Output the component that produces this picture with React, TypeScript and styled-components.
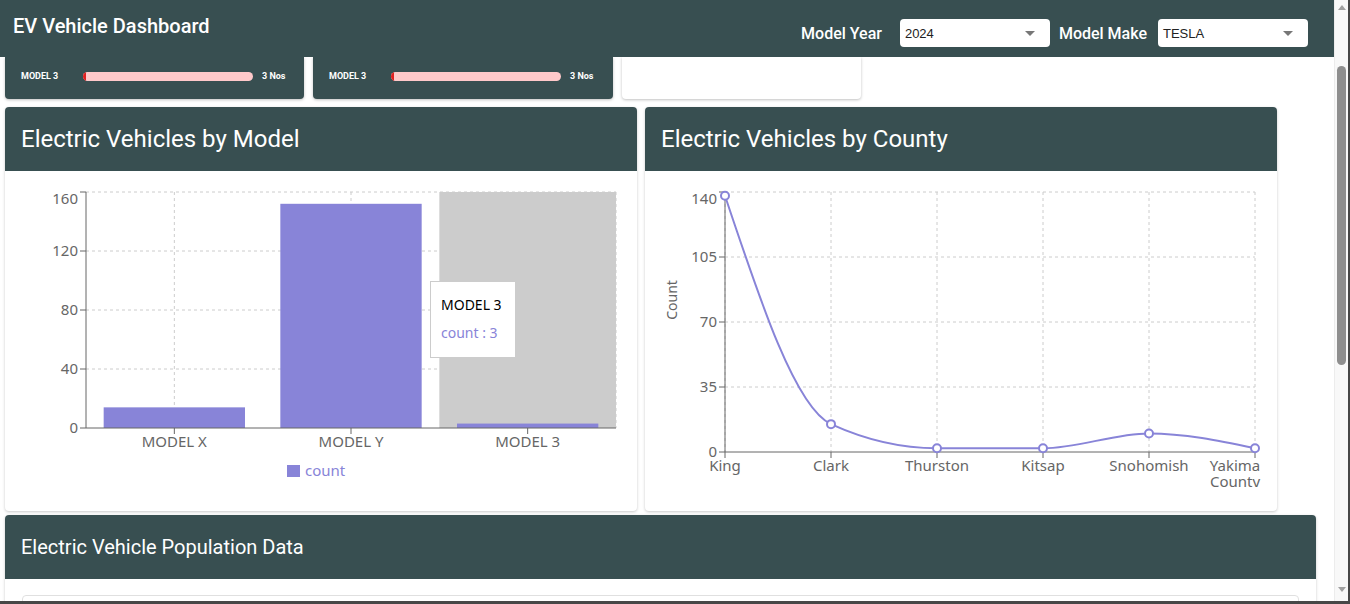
import React from "react";
import styled, { createGlobalStyle } from "styled-components";

const GlobalStyle = createGlobalStyle`
  html, body { margin: 0; padding: 0; background: #ffffff; }
  body { font-family: Roboto, "Noto Sans", Arial, sans-serif; }
  * { box-sizing: border-box; }
`;

const TEAL = "#384f51";
const PURPLE = "#8884d8";
const CHART_FONT = `"Noto Sans", "Open Sans", Arial, sans-serif`;

const Root = styled.div`
  display: flex;
  width: 1350px;
  height: 604px;
  overflow: hidden;
  background: #ffffff;
  border-right: 2px solid #474747;
  border-bottom: 3px solid #474747;
`;

const Main = styled.div`
  flex: 1;
  display: flex;
  flex-direction: column;
  min-width: 0;
  overflow: hidden;
`;

const Header = styled.header`
  flex: none;
  height: 57px;
  background: ${TEAL};
  display: flex;
  align-items: flex-start;
  justify-content: space-between;
  padding: 0 26px 0 13px;
  position: relative;
  z-index: 2;
`;

const Title = styled.h1`
  margin: 14px 0 0;
  font-family: Roboto, sans-serif;
  font-weight: 500;
  font-size: 20px;
  line-height: 24px;
  color: #ffffff;
`;

const Controls = styled.div`
  display: flex;
  align-items: center;
  margin-top: 19px;
`;

const ControlLabel = styled.span<{ $gap: number }>`
  font-family: Roboto, sans-serif;
  font-weight: 500;
  font-size: 16px;
  color: #ffffff;
  margin-right: ${(p) => p.$gap}px;
`;

const Select = styled.div<{ $last?: boolean }>`
  width: 150px;
  height: 28px;
  background: #ffffff;
  border-radius: 4px;
  display: flex;
  align-items: center;
  justify-content: space-between;
  padding: 0 15px 0 5px;
  margin-right: ${(p) => (p.$last ? "0" : "9px")};
  font-family: "Liberation Sans", Arial, sans-serif;
  font-size: 13px;
  color: #222;
`;

const Caret = styled.span`
  width: 0;
  height: 0;
  border-left: 5px solid transparent;
  border-right: 5px solid transparent;
  border-top: 5px solid #777;
`;

const Content = styled.div`
  flex: 1;
  display: flex;
  flex-direction: column;
  padding: 0 0 0 5px;
  overflow: hidden;
`;

const StatRow = styled.div`
  display: flex;
  gap: 9px;
  flex: none;
`;

const StatCard = styled.div<{ $w: number; $light?: boolean }>`
  width: ${(p) => p.$w}px;
  height: 42px;
  background: ${(p) => (p.$light ? "#ffffff" : TEAL)};
  border-radius: 0 0 4px 4px;
  box-shadow: 0 1px 3px rgba(0, 0, 0, 0.25);
  display: flex;
  align-items: center;
  padding: 0 0 4px 16px;
`;

const StatLabel = styled.span`
  width: 62px;
  font-family: Roboto, Arial, sans-serif;
  font-weight: 700;
  font-size: 9px;
  color: #ffffff;
`;

const Track = styled.div`
  width: 170px;
  height: 9px;
  border-radius: 5px;
  background: #ffc9ca;
  overflow: hidden;
  display: flex;
`;

const Fill = styled.div`
  height: 100%;
  background: #e02020;
`;

const StatValue = styled.span`
  margin-left: 9px;
  font-family: Roboto, Arial, sans-serif;
  font-weight: 700;
  font-size: 9px;
  color: #ffffff;
`;

const ChartRow = styled.div`
  display: flex;
  gap: 8px;
  margin-top: 8px;
  flex: none;
`;

const Card = styled.section<{ $w: number }>`
  width: ${(p) => p.$w}px;
  background: #ffffff;
  border-radius: 4px;
  box-shadow: 0 1px 3px rgba(0, 0, 0, 0.22);
  overflow: hidden;
  flex: none;
`;

const CardHeader = styled.div`
  height: 64px;
  background: ${TEAL};
  display: flex;
  align-items: center;
  padding-left: 16px;
`;

const CardTitle = styled.h2<{ $size: number }>`
  margin: 0;
  font-family: Roboto, sans-serif;
  font-weight: 400;
  font-size: ${(p) => p.$size}px;
  color: #ffffff;
`;

const ChartBody = styled.div`
  height: 340px;
  position: relative;
`;

const Tooltip = styled.div`
  position: absolute;
  left: 425px;
  top: 110px;
  width: 86px;
  height: 77px;
  background: #ffffff;
  border: 1px solid #cccccc;
  padding: 11px 10px;
  font-family: ${CHART_FONT};
  font-size: 14px;
  white-space: nowrap;
`;

const TipTitle = styled.div`
  color: #000;
  line-height: 24px;
`;

const TipItem = styled.div`
  color: ${PURPLE};
  line-height: 32px;
`;

const TableBody = styled.div`
  padding: 16px 17px;
`;

const TableBox = styled.div`
  height: 200px;
  border: 1px solid #e0e0e0;
  border-radius: 4px;
`;

const ScrollBar = styled.div`
  width: 14px;
  flex: none;
  background: #f8f8f8;
  border-left: 1px solid #ececec;
  display: flex;
  flex-direction: column;
  align-items: center;
  padding-top: 5px;
`;

const ArrowUp = styled.span`
  width: 0;
  height: 0;
  border-left: 4px solid transparent;
  border-right: 4px solid transparent;
  border-bottom: 5px solid #a0a0a0;
`;

const ArrowDown = styled.span`
  width: 0;
  height: 0;
  border-left: 4px solid transparent;
  border-right: 4px solid transparent;
  border-top: 5px solid #a0a0a0;
  margin-top: auto;
  margin-bottom: 9px;
`;

const Thumb = styled.div`
  width: 9px;
  height: 299px;
  margin-top: 56px;
  border-radius: 5px;
  background: #8e8e8e;
`;

/* ---------- Bar chart ---------- */
const barData = [
  { name: "MODEL X", value: 14 },
  { name: "MODEL Y", value: 152 },
  { name: "MODEL 3", value: 3 },
];

function BarChartSvg() {
  const left = 81;
  const right = 611;
  const top = 21;
  const bottom = 257;
  const k = (bottom - top) / 160;
  const band = (right - left) / 3;
  const ticks = [0, 40, 80, 120, 160];
  return (
    <svg width={632} height={320} style={{ display: "block", fontFamily: CHART_FONT }}>
      <rect x={left + band * 2} y={top} width={band} height={bottom - top} fill="#cccccc" />
      {ticks.slice(1).map((t) => (
        <line key={t} x1={left} x2={right} y1={bottom - t * k} y2={bottom - t * k} stroke="#ccc" strokeDasharray="3 3" />
      ))}
      {[0, 1, 2].map((i) => (
        <line key={i} x1={left + band * (i + 0.5)} x2={left + band * (i + 0.5)} y1={top} y2={bottom} stroke="#ccc" strokeDasharray="3 3" />
      ))}
      <line x1={right} x2={right} y1={top} y2={bottom} stroke="#ccc" strokeDasharray="3 3" />
      {barData.map((d, i) => {
        const x = left + band * i + band * 0.1;
        const h = d.value * k;
        return <rect key={d.name} x={x} y={bottom - h} width={band * 0.8} height={h} fill={PURPLE} />;
      })}
      <line x1={left} x2={left} y1={top} y2={bottom} stroke="#666" />
      <line x1={left} x2={right} y1={bottom} y2={bottom} stroke="#666" />
      {ticks.map((t) => (
        <g key={t}>
          <line x1={left - 6} x2={left} y1={bottom - t * k} y2={bottom - t * k} stroke="#666" />
          <text
            x={left - 8}
            y={t === 160 ? bottom - t * k + 7 : bottom - t * k}
            dy="0.355em"
            textAnchor="end"
            fill="#666"
            fontSize={15}
          >
            {t}
          </text>
        </g>
      ))}
      {barData.map((d, i) => (
        <g key={d.name}>
          <line x1={left + band * (i + 0.5)} x2={left + band * (i + 0.5)} y1={bottom} y2={bottom + 6} stroke="#666" />
          <text x={left + band * (i + 0.5)} y={bottom + 14} dy="0.355em" textAnchor="middle" fill="#666" fontSize={15}>
            {d.name}
          </text>
        </g>
      ))}
      <rect x={282} y={294} width={13} height={12} fill={PURPLE} />
      <text x={300} y={300} dy="0.355em" fill={PURPLE} fontSize={15}>
        count
      </text>
    </svg>
  );
}

/* ---------- Line chart ---------- */
const lineData = [
  { name: "King", value: 138 },
  { name: "Clark", value: 15 },
  { name: "Thurston", value: 2 },
  { name: "Kitsap", value: 2 },
  { name: "Snohomish", value: 10 },
  { name: "Yakima County", value: 2 },
];

function sign(x: number) {
  return x < 0 ? -1 : 1;
}

function monotonePath(pts: [number, number][]) {
  const n = pts.length;
  const t: number[] = new Array(n).fill(0);
  for (let i = 1; i < n - 1; i++) {
    const [x0, y0] = pts[i - 1];
    const [x1, y1] = pts[i];
    const [x2, y2] = pts[i + 1];
    const h0 = x1 - x0;
    const h1 = x2 - x1;
    const s0 = (y1 - y0) / h0;
    const s1 = (y2 - y1) / h1;
    const p = (s0 * h1 + s1 * h0) / (h0 + h1);
    t[i] = (sign(s0) + sign(s1)) * Math.min(Math.abs(s0), Math.abs(s1), 0.5 * Math.abs(p)) || 0;
  }
  t[0] = ((3 * (pts[1][1] - pts[0][1])) / (pts[1][0] - pts[0][0]) - t[1]) / 2;
  t[n - 1] = ((3 * (pts[n - 1][1] - pts[n - 2][1])) / (pts[n - 1][0] - pts[n - 2][0]) - t[n - 2]) / 2;
  let d = `M${pts[0][0]},${pts[0][1]}`;
  for (let i = 0; i < n - 1; i++) {
    const [x0, y0] = pts[i];
    const [x1, y1] = pts[i + 1];
    const dx = (x1 - x0) / 3;
    d += `C${x0 + dx},${y0 + dx * t[i]},${x1 - dx},${y1 - dx * t[i + 1]},${x1},${y1}`;
  }
  return d;
}

function LineChartSvg() {
  const left = 80;
  const right = 610;
  const top = 21;
  const bottom = 281;
  const k = (bottom - top) / 140;
  const step = (right - left) / 5;
  const ticks = [0, 35, 70, 105, 140];
  const pts: [number, number][] = lineData.map((d, i) => [left + step * i, bottom - d.value * k]);
  return (
    <svg width={632} height={316} style={{ display: "block", fontFamily: CHART_FONT }}>
      {ticks.slice(1).map((t) => (
        <line key={t} x1={left} x2={right} y1={bottom - t * k} y2={bottom - t * k} stroke="#ccc" strokeDasharray="3 3" />
      ))}
      {lineData.map((d, i) => (
        <line key={d.name} x1={left + step * i} x2={left + step * i} y1={top} y2={bottom} stroke="#ccc" strokeDasharray="3 3" />
      ))}
      <line x1={left} x2={left} y1={top} y2={bottom} stroke="#666" />
      <line x1={left} x2={right} y1={bottom} y2={bottom} stroke="#666" />
      {ticks.map((t) => (
        <g key={t}>
          <line x1={left - 6} x2={left} y1={bottom - t * k} y2={bottom - t * k} stroke="#666" />
          <text
            x={left - 8}
            y={t === 140 ? bottom - t * k + 7 : bottom - t * k}
            dy="0.355em"
            textAnchor="end"
            fill="#666"
            fontSize={15}
          >
            {t}
          </text>
        </g>
      ))}
      <text x={27} y={129} transform="rotate(-90 27 129)" textAnchor="middle" dy="0.355em" fill="#666" fontSize={14}>
        Count
      </text>
      {lineData.map((d, i) => {
        const x = left + step * i;
        const last = i === lineData.length - 1;
        return (
          <g key={d.name}>
            <line x1={x} x2={x} y1={bottom} y2={bottom + 6} stroke="#666" />
            {last ? (
              <text x={x - 19} y={bottom + 14} dy="0.355em" textAnchor="middle" fill="#666" fontSize={15}>
                <tspan x={x - 20}>Yakima</tspan>
                <tspan x={x - 20} dy="16">
                  County
                </tspan>
              </text>
            ) : (
              <text x={x} y={bottom + 14} dy="0.355em" textAnchor="middle" fill="#666" fontSize={15}>
                {d.name}
              </text>
            )}
          </g>
        );
      })}
      <path d={monotonePath(pts)} fill="none" stroke={PURPLE} strokeWidth={2} />
      {pts.map(([x, y], i) => (
        <circle key={i} cx={x} cy={y} r={4} fill="#fff" stroke={PURPLE} strokeWidth={2} />
      ))}
    </svg>
  );
}

function StatItem({ w }: { w: number }) {
  return (
    <StatCard $w={w}>
      <StatLabel>MODEL 3</StatLabel>
      <Track>
        <Fill style={{ width: "2%" }} />
      </Track>
      <StatValue>3 Nos</StatValue>
    </StatCard>
  );
}

export default function App() {
  return (
    <>
      <GlobalStyle />
      <Root>
        <Main>
          <Header>
            <Title>EV Vehicle Dashboard</Title>
            <Controls>
              <ControlLabel $gap={18}>Model Year</ControlLabel>
              <Select>
                <span>2024</span>
                <Caret />
              </Select>
              <ControlLabel $gap={11}>Model Make</ControlLabel>
              <Select $last>
                <span>TESLA</span>
                <Caret />
              </Select>
            </Controls>
          </Header>
          <Content>
            <StatRow>
              <StatItem w={299} />
              <StatItem w={300} />
              <StatCard $w={239} $light />
            </StatRow>
            <ChartRow>
              <Card $w={632}>
                <CardHeader>
                  <CardTitle $size={24}>Electric Vehicles by Model</CardTitle>
                </CardHeader>
                <ChartBody>
                  <BarChartSvg />
                  <Tooltip>
                    <TipTitle>MODEL 3</TipTitle>
                    <TipItem>count : 3</TipItem>
                  </Tooltip>
                </ChartBody>
              </Card>
              <Card $w={632}>
                <CardHeader>
                  <CardTitle $size={24}>Electric Vehicles by County</CardTitle>
                </CardHeader>
                <ChartBody>
                  <LineChartSvg />
                </ChartBody>
              </Card>
            </ChartRow>
            <Card $w={1311} style={{ marginTop: 4 }}>
              <CardHeader>
                <CardTitle $size={20}>Electric Vehicle Population Data</CardTitle>
              </CardHeader>
              <TableBody>
                <TableBox />
              </TableBody>
            </Card>
          </Content>
        </Main>
        <ScrollBar>
          <ArrowUp />
          <Thumb />
          <ArrowDown />
        </ScrollBar>
      </Root>
    </>
  );
}
